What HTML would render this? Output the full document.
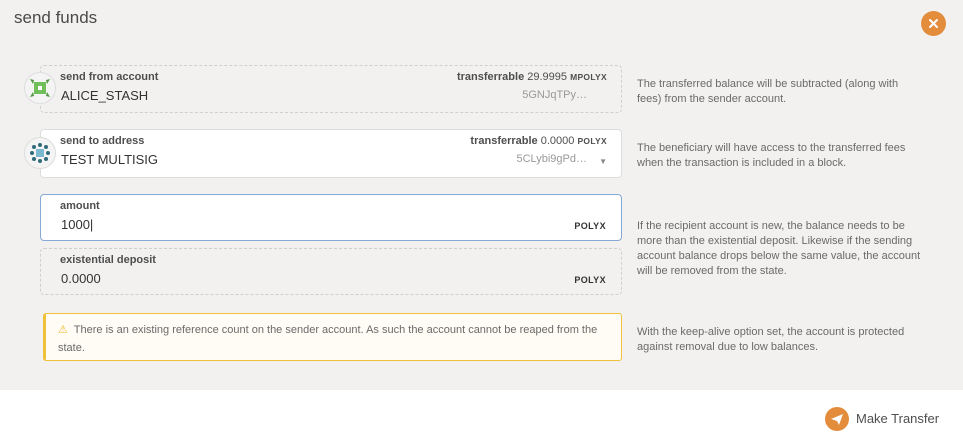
<!DOCTYPE html>
<html><head><style>
*{box-sizing:border-box;margin:0;padding:0}
body{width:963px;height:447px;background:#fff;font-family:"Liberation Sans",sans-serif;position:relative;overflow:hidden;color:#4e4e4e}
.top{position:absolute;left:0;top:0;width:963px;height:390px;background:#f2f1f0}
.title{position:absolute;left:14px;top:8px;font-size:17px;color:#4a4a4a}
.close{position:absolute;left:921px;top:11px;width:25px;height:25px;border-radius:50%;background:#e38c3c}
.box{position:absolute;left:40px;width:582px;border-radius:4px}
.dash{border:1px dashed #cfcfcf}
.solid{background:#fff;border:1px solid #ddd}
.lab{position:absolute;left:19px;top:5px;font-size:11px;font-weight:bold;color:#4e4e4e}
.val{position:absolute;left:20px;top:22px;font-size:13px;color:#333}
.rt{position:absolute;right:14px;top:5px;font-size:11px;color:#4e4e4e}
.rt b{font-weight:bold}
.sm{font-size:8.5px;font-weight:bold;letter-spacing:.3px}
.addr{position:absolute;right:34px;top:23px;font-size:11px;color:#999}
.unit{position:absolute;right:15px;top:26px;font-size:9px;font-weight:bold;color:#333;letter-spacing:.4px}
.help{position:absolute;left:637px;font-size:11px;line-height:15px;color:#6a6a6a;width:288px}
.ic{position:absolute;left:24px;width:32px;height:32px;border-radius:50%;background:#f4f4f4;border:1px solid #ddd}
.warn{position:absolute;left:43px;top:313px;width:579px;height:48px;background:#fffcf5;border:1px solid #f0c23a;border-left:3px solid #f0c23a;border-radius:3px;font-size:11px;color:#6a6a6a;line-height:18px;padding:7px 0 0 12px}
.btn{position:absolute;left:825px;top:407px;width:24px;height:24px;border-radius:50%;background:#e38c3c}
.bt{position:absolute;left:856px;top:411px;font-size:13px;color:#4e4e4e}
</style></head><body>
<div class="top"></div>
<div class="title">send funds</div>
<div class="close"><svg width="25" height="25"><path d="M9 9l7 7M16 9l-7 7" stroke="#fff" stroke-width="2" stroke-linecap="round"/></svg></div>

<div class="box dash" style="top:65px;height:48px">
<div class="lab">send from account</div><div class="val">ALICE_STASH</div>
<div class="rt"><b>transferrable</b> 29.9995 <span class="sm">MPOLYX</span></div>
<div class="addr">5GNJqTPy…</div></div>
<div class="ic" style="top:72px"><svg width="30" height="30"><rect x="9" y="9" width="12" height="12" fill="#6fbf5a"/><path d="M5 6l4 1-1 4zM25 6l-4 1 1 4zM5 24l4-1-1-4zM25 24l-4-1 1-4z" fill="#4a9a3c"/><rect x="13" y="13" width="4" height="4" fill="#fff"/></svg></div>
<div class="help" style="top:77px">The transferred balance will be subtracted (along with fees) from the sender account.</div>

<div class="box solid" style="top:129px;height:49px">
<div class="lab">send to address</div><div class="val">TEST MULTISIG</div>
<div class="rt"><b>transferrable</b> 0.0000 <span class="sm">POLYX</span></div>
<div class="addr">5CLybi9gPd…</div><div style="position:absolute;right:14px;top:27px;font-size:8px;color:#888">▼</div></div>
<div class="ic" style="top:137px"><svg width="30" height="30"><g fill="#2f6b7a"><circle cx="9" cy="9" r="2"/><circle cx="15" cy="7" r="2"/><circle cx="21" cy="9" r="2"/><circle cx="7" cy="15" r="2"/><circle cx="23" cy="15" r="2"/><circle cx="9" cy="21" r="2"/><circle cx="15" cy="23" r="2"/><circle cx="21" cy="21" r="2"/></g><rect x="11" y="11" width="8" height="8" fill="#7ab8d0"/></svg></div>
<div class="help" style="top:141px">The beneficiary will have access to the transferred fees when the transaction is included in a block.</div>

<div class="box solid" style="top:194px;height:47px;border-color:#86a9d8">
<div class="lab">amount</div><div class="val">1000|</div><div class="unit">POLYX</div></div>
<div class="box dash" style="top:248px;height:47px">
<div class="lab">existential deposit</div><div class="val">0.0000</div><div class="unit">POLYX</div></div>
<div class="help" style="top:219px">If the recipient account is new, the balance needs to be more than the existential deposit. Likewise if the sending account balance drops below the same value, the account will be removed from the state.</div>

<div class="warn"><span style="color:#f0b92c">⚠</span>&nbsp; There is an existing reference count on the sender account. As such the account cannot be reaped from the state.</div>
<div class="help" style="top:325px">With the keep-alive option set, the account is protected against removal due to low balances.</div>

<div class="btn"><svg width="24" height="24"><path d="M6 12l12-5-4 11-2-4z" fill="#fff"/></svg></div>
<div class="bt">Make Transfer</div>
</body></html>
